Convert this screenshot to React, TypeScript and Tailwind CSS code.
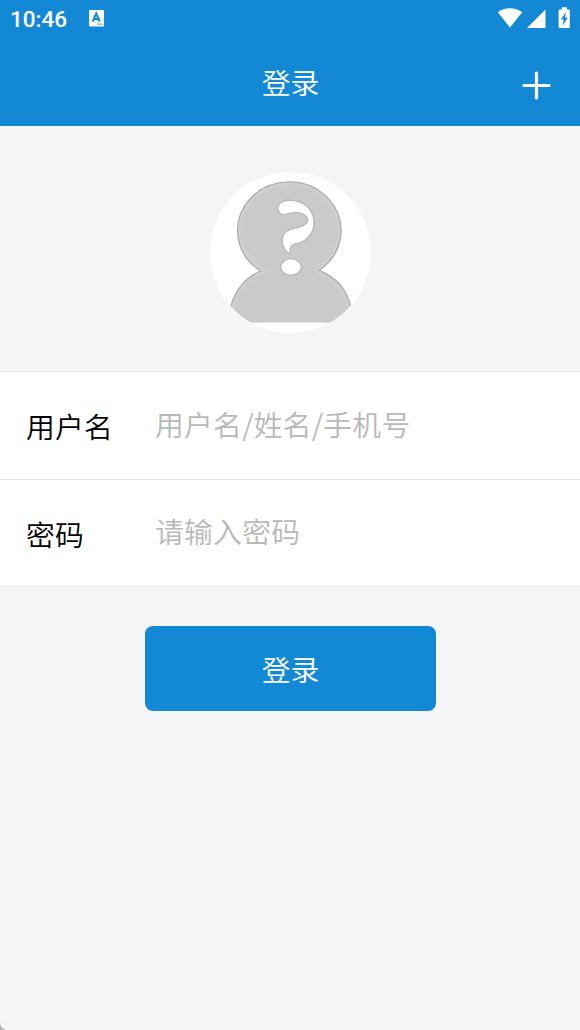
import React from "react";

const StatusBar = () => {
  return (
    <div className="flex h-9 items-center justify-between pl-2.5 pr-[9px]">
      <div className="flex items-center">
        <span className="w-[78px] pt-[3px] font-['Roboto'] text-[22.5px] font-medium leading-[31px]">
          10:46
        </span>
        <svg width="17" height="18" viewBox="0 0 17 18">
          <rect x="1" y="1" width="15" height="16.5" rx="1.2" fill="#fff" />
          <path
            d="M4.7 12.5 8.2 4.5 11.7 12.5M5.8 10H10.6"
            fill="none"
            stroke="#1389d5"
            strokeWidth="2"
          />
          <path d="M9 15.2h1.3M11.2 15.2h1.3M13.3 15.2h1.2" stroke="#1389d5" strokeWidth="1.2" />
        </svg>
      </div>
      <svg width="74" height="24" viewBox="0 0 74 24" fill="#fff">
        <path d="M.8 6.2C7.5.9 18.5.9 25.2 6.2L13 21.5Z" />
        <path d="M48.5 3.5V22H30Z" />
        <path
          fillRule="evenodd"
          d="M64.8 1.2h5v2.2h1.8q1.2 0 1.2 1.2V20.8q0 1.2-1.2 1.2h-8.8q-1.2 0-1.2-1.2V4.6q0-1.2 1.2-1.2h2ZM68.8 6.2 64 13.4h2.6l-.8 6 5-8h-2.8Z"
        />
      </svg>
    </div>
  );
};

const Avatar = () => {
  return (
    <div className="ml-[210px] h-[161px] w-[161px] overflow-hidden rounded-full bg-white">
      <svg viewBox="30 36 483 483" className="h-full w-full">
        <defs>
          <filter id="soft" x="-10%" y="-10%" width="120%" height="120%">
            <feGaussianBlur stdDeviation="5" />
          </filter>
          <clipPath id="circle">
            <circle cx="271.5" cy="277.5" r="241.5" />
          </clipPath>
          <clipPath id="body">
            <path d="M182 333A155 146 0 1 1 357 331C405 350 440 385 452 440L470 488H75L93 438C105 388 140 350 182 333Z" />
          </clipPath>
        </defs>
        <g clipPath="url(#circle)">
          <g clipPath="url(#body)">
            <rect x="60" y="50" width="430" height="439" fill="#cacaca" />
            <path
              d="M182 333A155 146 0 1 1 357 331C405 350 440 385 452 440L470 520H75L93 438C105 388 140 350 182 333Z"
              fill="none"
              stroke="#d2d2d2"
              strokeWidth="16"
              filter="url(#soft)"
            />
          </g>
          <path
            d="M93 438C105 388 140 350 182 333A155 146 0 1 1 357 331C405 350 440 385 452 440"
            fill="none"
            stroke="#adadad"
            strokeWidth="4"
          />
        </g>
        <path
          d="M249 164C235 161 230 145 237 133C244 122 260 120 277 121C316 124 344 153 342 191C340 225 316 247 286 252C272 255 268 262 271 277C266 283 259 277 252 264C242 245 245 220 265 211C285 202 315 202 322 186C327 171 310 158 290 157C273 156 262 166 249 164Z"
          fill="#fff"
          stroke="#b8b8b8"
          strokeWidth="4"
        />
        <ellipse cx="273" cy="321" rx="31" ry="25" fill="#fff" stroke="#b8b8b8" strokeWidth="4" />
      </svg>
    </div>
  );
};

export const Login = () => {
  return (
    <div className="relative min-h-[1030px] w-[580px] overflow-hidden bg-[#f5f5f5] font-['Noto_Sans_CJK_SC',sans-serif] text-[28.8px] font-[350] leading-10">
      <header className="h-[126px] bg-[#1389d5] text-white">
        <StatusBar />
        <div className="grid h-[90px] grid-cols-[1fr_auto_1fr] items-center pr-[29px]">
          <h1 className="col-start-2 ml-[30px] pt-0.5">登录</h1>
          <svg width="29" height="29" viewBox="0 0 29 29" className="mt-2 justify-self-end">
            <path
              d="M14.5 2V27M2 14.5H27"
              stroke="#fff"
              strokeWidth="3.2"
              strokeLinecap="round"
            />
          </svg>
        </div>
      </header>

      <div className="h-[245px] pt-[45.5px]">
        <Avatar />
      </div>

      <form>
        <div className="border-y border-[#e9e9e9] bg-white">
          {fields.map((field) => (
            <label
              key={field.name}
              className="flex h-[107px] items-center border-[#e9e9e9] pl-[26px] not-first:border-t"
            >
              <span className="w-[129px] pt-px tracking-[0.2px] text-black">{field.label}</span>
              <input
                type={field.type}
                name={field.name}
                placeholder={field.placeholder}
                className="mb-[5px] h-12 w-[400px] bg-transparent tracking-[0.25px] outline-none placeholder:text-[#b8b8b8]"
              />
            </label>
          ))}
        </div>
        <button
          type="button"
          className="mx-auto mt-[39px] block h-[85px] w-[291px] rounded-lg bg-[#1389d5] pl-px text-white"
        >
          登录
        </button>
      </form>

      <svg width="6" height="8" viewBox="0 0 6 8" className="absolute bottom-0 left-0">
        <path d="M0 0Q0 6 6 8H0Z" fill="#b5b5b5" />
      </svg>
    </div>
  );
};

const fields = [
  {
    name: "username",
    type: "text",
    label: "用户名",
    placeholder: "用户名/姓名/手机号",
  },
  {
    name: "password",
    type: "password",
    label: "密码",
    placeholder: "请输入密码",
  },
];

export default Login;
